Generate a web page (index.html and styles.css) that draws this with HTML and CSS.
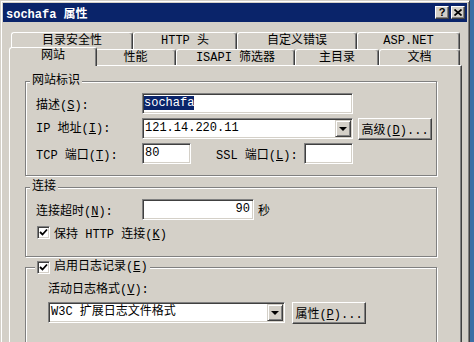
FILE: index.html
```html
<!DOCTYPE html>
<html>
<head>
  <meta charset="UTF-8">
  <title>sochafa 属性</title>
  <link rel="stylesheet" href="styles.css">
</head>
<body>
  <div class="window">
    <div class="titlebar">
      <span class="title">sochafa 属性</span>
      <div class="caption-btns">
        <div class="cap help">?</div>
        <div class="cap">
          <svg width="8" height="7" viewBox="0 0 8 7"><path d="M0.5 0.5 L7.5 6.5 M7.5 0.5 L0.5 6.5" stroke="#000" stroke-width="1.7" fill="none"/></svg>
        </div>
      </div>
    </div>

    <div class="content">
      <div class="tabs">
        <div class="tab-row back">
          <div class="tab">目录安全性</div>
          <div class="tab">HTTP 头</div>
          <div class="tab">自定义错误</div>
          <div class="tab">ASP.NET</div>
        </div>
        <div class="tab-row front">
          <div class="tab active">网站</div>
          <div class="tab">性能</div>
          <div class="tab">ISAPI 筛选器</div>
          <div class="tab">主目录</div>
          <div class="tab">文档</div>
        </div>
      </div>

      <div class="panel">
        <div class="group group-site">
          <div class="group-title">网站标识</div>
          <div class="row first">
            <span class="label">描述(<u>S</u>):</span>
            <div class="field wide"><span class="selected">sochafa</span></div>
          </div>
          <div class="row top">
            <span class="label">IP 地址(<u>I</u>):</span>
            <div class="field select wide">
              <span class="value">121.14.220.11</span>
              <span class="drop"><span class="arrow"></span></span>
            </div>
            <button class="btn adv">高级(<u>D</u>)...</button>
          </div>
          <div class="row">
            <span class="label">TCP 端口(<u>T</u>):</span>
            <div class="field port">80</div>
            <span class="label ssl">SSL 端口(<u>L</u>):</span>
            <div class="field port"></div>
          </div>
        </div>

        <div class="group group-conn">
          <div class="group-title">连接</div>
          <div class="row first">
            <span class="label">连接超时(<u>N</u>):</span>
            <div class="field timeout">90</div>
            <span class="unit">秒</span>
          </div>
          <div class="check-row">
            <span class="checkbox">
              <svg width="9" height="9" viewBox="0 0 9 9"><path d="M1 4 L3.5 6.5 L8 1.5" stroke="#000" stroke-width="1.8" fill="none"/></svg>
            </span>
            <span class="check-label">保持 HTTP 连接(<u>K</u>)</span>
          </div>
        </div>

        <div class="group group-log">
          <div class="group-title">
            <span class="checkbox">
              <svg width="9" height="9" viewBox="0 0 9 9"><path d="M1 4 L3.5 6.5 L8 1.5" stroke="#000" stroke-width="1.8" fill="none"/></svg>
            </span>
            <span class="check-label">启用日志记录(<u>E</u>)</span>
          </div>
          <div class="log-label">活动日志格式(<u>V</u>):</div>
          <div class="row first">
            <div class="field select log-format">
              <span class="value">W3C 扩展日志文件格式</span>
              <span class="drop"><span class="arrow"></span></span>
            </div>
            <button class="btn props">属性(<u>P</u>)...</button>
          </div>
        </div>
      </div>
    </div>
  </div>
</body>
</html>
```

FILE: styles.css
```css
body {
  margin: 0;
  background-color: #3a6ea5;
  font-family: "Liberation Mono", "Noto Sans CJK SC", monospace;
  font-size: 12px;
  color: #000;
  overflow: hidden;
}
.window {
  width: 470px;
  height: 342px;
  box-sizing: border-box;
  background: #d4d0c8;
  border: 1px solid;
  border-bottom: 0;
  border-color: #d4d0c8 #404040 #404040 #d4d0c8;
  box-shadow: inset 1px 1px #fff, inset -1px 0 #808080;
  padding: 2px;
  overflow: hidden;
}
.titlebar {
  height: 19px;
  background: #0a246a;
  color: #fff;
  display: flex;
  align-items: center;
  padding: 0 2px 0 3px;
}
.title {
  flex: 1;
  font-weight: bold;
}
.caption-btns {
  display: flex;
  gap: 2px;
}
.cap {
  width: 14px;
  height: 13px;
  box-sizing: border-box;
  background: #d4d0c8;
  border: 1px solid;
  border-color: #fff #404040 #404040 #fff;
  box-shadow: inset -1px -1px #808080;
  display: flex;
  align-items: center;
  justify-content: center;
  color: #000;
}
.help {
  font-family: "Liberation Sans", sans-serif;
  font-weight: bold;
  font-size: 11px;
  line-height: 11px;
}
.content {
  padding: 10px 5px 0 6px;
}
.tab-row {
  display: flex;
  padding-left: 2px;
}
.back {
  height: 17px;
}
.front {
  height: 16px;
  align-items: flex-end;
}
.tab {
  flex-shrink: 0;
  box-sizing: border-box;
  height: 17px;
  border: 1px solid;
  border-bottom: 0;
  border-color: #fff #404040 #fff #fff;
  box-shadow: inset -1px 0 #808080;
  border-radius: 3px 3px 0 0;
  background: #d4d0c8;
  text-align: center;
  line-height: 16px;
  white-space: nowrap;
}
.front .tab {
  height: 16px;
  line-height: 16px;
}
.back .tab:nth-child(1) { width: 122px; }
.back .tab:nth-child(2) { width: 104px; }
.back .tab:nth-child(3) { width: 120px; }
.back .tab:nth-child(4) { width: 103px; }
.front .tab:nth-child(1) { width: 88px; }
.front .tab:nth-child(2) { width: 81px; }
.front .tab:nth-child(3) { width: 119px; }
.front .tab:nth-child(4) { width: 84px; }
.front .tab:nth-child(5) { width: 81px; }
.front .tab.active {
  height: 19px;
  line-height: 16px;
  margin: 0 -2px -1px;
  position: relative;
  z-index: 1;
}
.panel {
  box-sizing: border-box;
  height: 290px;
  border: 1px solid;
  border-color: #fff #404040 #404040 #fff;
  box-shadow: inset -1px -1px #808080;
  padding: 15px 0 0 15px;
}
.group {
  width: 412px;
  box-sizing: border-box;
  border: 1px solid #808080;
  box-shadow: inset 1px 1px #fff, 1px 1px #fff;
  padding: 0 0 11px 10px;
}
.group-conn {
  margin-top: 11px;
  padding-bottom: 17px;
}
.group-log {
  margin-top: 10px;
  padding: 0 0 30px 22px;
}
.group-title {
  margin: -8px 0 0 -6px;
  padding: 0 2px;
  width: fit-content;
  background: #d4d0c8;
  line-height: 14px;
  display: flex;
  align-items: center;
}
.group-log .group-title {
  margin-left: -13px;
}
.row {
  display: flex;
  align-items: center;
  height: 21px;
  margin-top: 4px;
}
.row > * {
  flex-shrink: 0;
}
.row.first {
  margin-top: 5px;
}
.row.top {
  align-items: flex-start;
}
.label {
  width: 106px;
  white-space: nowrap;
}
.label.ssl {
  width: 88px;
  margin-left: 25px;
}
.field {
  height: 21px;
  box-sizing: border-box;
  background: #fff;
  border: 1px solid;
  border-color: #808080 #fff #fff #808080;
  box-shadow: inset 1px 1px #404040, inset -1px -1px #d4d0c8;
  padding: 0 1px 0 1px;
  line-height: 18px;
  white-space: nowrap;
}
.field.wide { width: 211px; }
.field.port { width: 49px; padding-left: 2px; }
.field.timeout {
  width: 112px;
  text-align: right;
  padding-right: 3px;
}
.selected {
  background: #0a246a;
  color: #fff;
}
.select {
  display: flex;
  padding: 1px 1px 1px 2px;
}
.select .value {
  flex: 1;
  line-height: 17px;
}
.drop {
  width: 16px;
  height: 17px;
  box-sizing: border-box;
  background: #d4d0c8;
  border: 1px solid;
  border-color: #d4d0c8 #404040 #404040 #d4d0c8;
  box-shadow: inset 1px 1px #fff, inset -1px -1px #808080;
  display: flex;
  align-items: center;
  justify-content: center;
}
.arrow {
  width: 0;
  height: 0;
  border-left: 4px solid transparent;
  border-right: 4px solid transparent;
  border-top: 4px solid #000;
}
.btn {
  height: 22px;
  width: 74px;
  box-sizing: border-box;
  background: #d4d0c8;
  border: 1px solid;
  border-color: #fff #404040 #404040 #fff;
  box-shadow: inset -1px -1px #808080;
  font: inherit;
  color: #000;
  padding: 0;
  white-space: nowrap;
}
.btn.adv { margin-left: 5px; }
.btn.props { margin-left: 7px; }
.unit {
  margin-left: 4px;
}
.check-row {
  display: flex;
  align-items: center;
  height: 13px;
  margin: 6px 0 0 1px;
}
.checkbox {
  flex-shrink: 0;
  width: 13px;
  height: 13px;
  box-sizing: border-box;
  background: #fff;
  border: 1px solid;
  border-color: #808080 #fff #fff #808080;
  box-shadow: inset 1px 1px #404040, inset -1px -1px #d4d0c8;
  display: flex;
  align-items: center;
  justify-content: center;
}
.check-label {
  margin-left: 4px;
  white-space: nowrap;
}
.log-label {
  margin-top: 9px;
  line-height: 14px;
}
.field.log-format {
  width: 237px;
}
```
